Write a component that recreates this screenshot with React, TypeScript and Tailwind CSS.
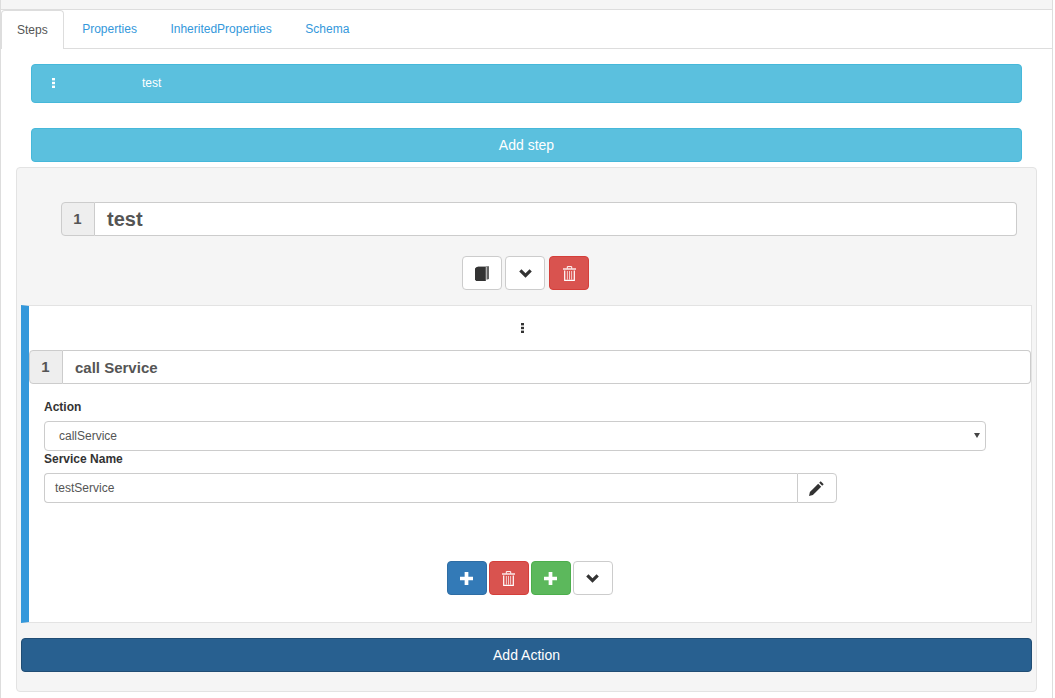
const DragDots = ({ className }: { className: string }) => (
  <svg width="3" height="10" viewBox="0 0 3 10" className={className} fill="currentColor">
    <rect y="0" width="3" height="2.4" />
    <rect y="3.8" width="3" height="2.4" />
    <rect y="7.6" width="3" height="2.4" />
  </svg>
);

const BookIcon = () => (
  <svg width="14" height="15" viewBox="0 0 14 15">
    <path d="M0 2.6 1.6 1H10.8V14.9H1.2L0 13.8z" fill="#333" />
    <path d="M2.6 0H14V.5H2.6z" fill="#555" />
    <path d="M11.5.5H14V13L11.5 13.7z" fill="#666" />
  </svg>
);

const ChevronIcon = () => (
  <svg width="13" height="9" viewBox="0 0 14 10" fill="#333">
    <path d="M0 2.7 2.5.2 7 4.7 11.5.2 14 2.7 7 9.7z" />
  </svg>
);

const TrashIcon = () => (
  <svg width="13" height="15" viewBox="0 0 13 15" fill="none" stroke="#fff">
    <path d="M0 3h13" strokeWidth="1.3" />
    <path d="M4.3 2.6V.6h4.4v2" strokeWidth="1" />
    <path d="M1.7 4.4v10h9.6v-10" strokeWidth="1.2" />
    <path d="M4.4 5v8.6M6.5 5v8.6M8.6 5v8.6" strokeWidth=".7" />
  </svg>
);

const PlusIcon = () => (
  <svg width="13" height="13" viewBox="0 0 14 14" fill="#fff">
    <path d="M5 0h4v5h5v4H9v5H5V9H0V5h5z" />
  </svg>
);

const PencilIcon = () => (
  <svg width="15" height="15" viewBox="0 0 15 15" fill="#333">
    <path d="M0 15l.9-3.9L9.2 2.8l3 3L3.9 14.1z" />
    <path d="M10.2 1.8 11.7.3l3 3-1.5 1.5z" />
  </svg>
);

const IconButton = ({ className, children }: { className: string; children: React.ReactNode }) => (
  <button className={`flex h-[34px] w-10 items-center justify-center rounded border ${className}`}>{children}</button>
);

const TitleGroup = ({ className, inputClass, value }: { className: string; inputClass: string; value: string }) => (
  <div className={`flex h-[34px] ${className}`}>
    <div className="flex w-[34px] items-center justify-center rounded-l border border-[#ccc] bg-[#eee] pr-[1px] text-[15px] font-bold text-[#555]">1</div>
    <div className={`flex flex-1 items-center rounded-r border border-l-0 border-[#ccc] bg-white font-bold text-[#555] ${inputClass}`}>{value}</div>
  </div>
);

export default function App() {
  return (
    <div className="h-[698px] w-[1053px] overflow-hidden border-x border-[#ddd] bg-white font-['Liberation_Sans',Arial,sans-serif] text-xs text-[#555]">
      <div className="h-[10px] border-b border-[#ddd] bg-[#f5f5f5]" />

      {/* tabs */}
      <div className="flex h-[39px] border-b border-[#ddd]">
        {['Steps', 'Properties', 'InheritedProperties', 'Schema'].map((tab) => (
          <div
            key={tab}
            className={
              tab === 'Steps'
                ? 'mr-[3.5px] -mb-px flex items-center rounded-t border border-b-0 border-[#ddd] bg-white px-[15px] text-[#555]'
                : 'mr-[3.5px] flex items-center px-[15px] text-[#3498db]'
            }
          >
            {tab}
          </div>
        ))}
      </div>

      <div className="mt-[15px] ml-[30px] flex h-[39px] w-[991px] items-center rounded border border-[#46b8da] bg-[#5bc0de] pb-[2px] text-white">
        <DragDots className="ml-[20px]" />
        <span className="ml-[87px]">test</span>
      </div>

      <button className="mt-[25px] ml-[30px] block h-[34px] w-[991px] rounded border border-[#46b8da] bg-[#5bc0de] text-sm text-white">
        Add step
      </button>

      {/* step panel */}
      <div className="mt-[5px] ml-[15px] h-[525px] w-[1021px] rounded border border-[#e3e3e3] bg-[#f5f5f5] pt-[34px]">
        <TitleGroup className="ml-[44px] w-[956px]" inputClass="pl-3 text-xl" value="test" />

        <div className="mt-5 ml-[445px] flex">
          <IconButton className="mr-[3px] border-[#ccc] bg-white"><BookIcon /></IconButton>
          <IconButton className="mr-1 border-[#ccc] bg-white"><ChevronIcon /></IconButton>
          <IconButton className="border-[#d43f3a] bg-[#d9534f]"><TrashIcon /></IconButton>
        </div>

        {/* action card */}
        <div className="mt-[15px] ml-1 h-[318px] w-[1011px] border border-l-[8px] border-[#e3e3e3] border-l-[#3498db] bg-white">
          <div className="flex h-[44px] items-center justify-center pr-[16px] text-[#333]">
            <DragDots className="" />
          </div>
          <TitleGroup className="w-[1002px]" inputClass="pt-[1px] pl-3 text-[15px]" value="call Service" />

          <div className="mt-4 ml-[15px] leading-[15px] font-bold text-[#333]">Action</div>
          <div className="relative mt-[6px] ml-[15px] flex h-[30px] w-[942px] items-center rounded border border-[#ccc] bg-white pl-[14px] text-[#555]">
            callService
            <span className="absolute top-[11px] right-[5px] h-0 w-0 border-x-[3px] border-t-[5px] border-x-transparent border-t-[#444]" />
          </div>
          <div className="mt-[1px] ml-[15px] leading-[15px] font-bold text-[#333]">Service Name</div>
          <div className="mt-[6px] ml-[15px] flex h-[30px] w-[793px]">
            <div className="flex flex-1 items-center rounded-l border border-r-0 border-[#ccc] bg-white pl-[10px]">testService</div>
            <div className="flex w-10 items-center justify-center rounded-r border border-[#ccc] bg-white pr-[2px]"><PencilIcon /></div>
          </div>

          <div className="mt-[58px] ml-[418px] flex gap-[2px]">
            <IconButton className="border-[#2e6da4] bg-[#337ab7] pr-[2px]"><PlusIcon /></IconButton>
            <IconButton className="border-[#d43f3a] bg-[#d9534f] pr-[1px]"><TrashIcon /></IconButton>
            <IconButton className="border-[#4cae4c] bg-[#5cb85c] pr-[2px]"><PlusIcon /></IconButton>
            <IconButton className="border-[#ccc] bg-white pr-[1px]"><ChevronIcon /></IconButton>
          </div>
        </div>

        <button className="mt-[15px] ml-1 block h-[34px] w-[1011px] rounded border border-[#204d74] bg-[#286090] text-sm text-white">
          Add Action
        </button>
      </div>
    </div>
  );
}
